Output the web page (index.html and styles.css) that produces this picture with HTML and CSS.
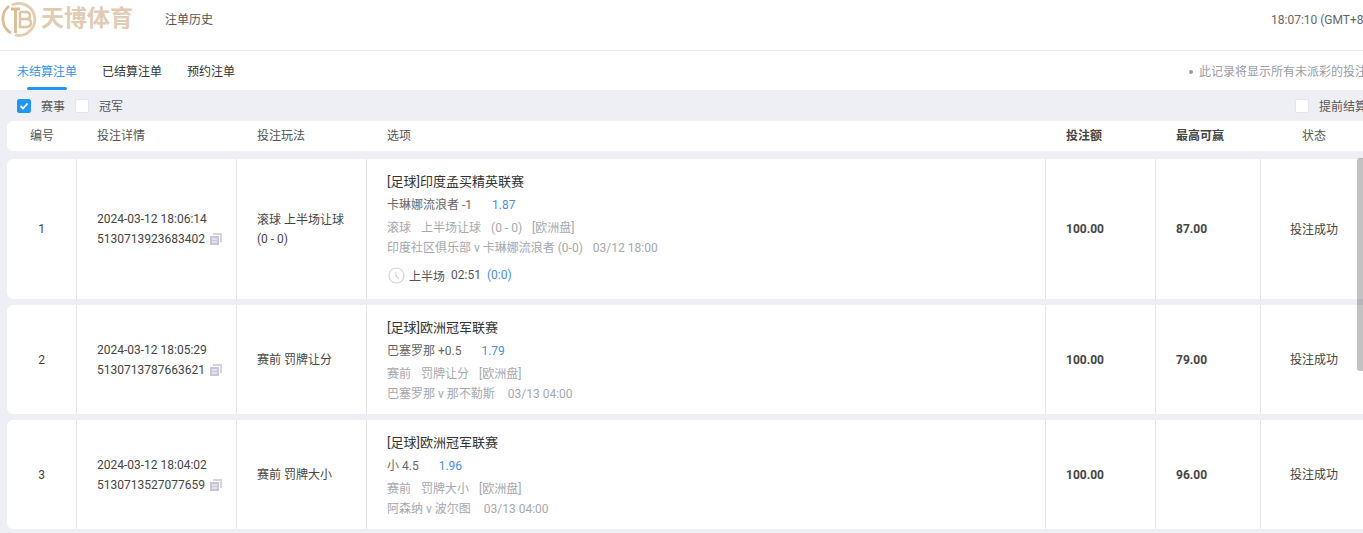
FILE: index.html

```html
<!DOCTYPE html>
<html>
  <head>
    <meta charset="UTF-8" />
    <title>注单历史</title>
    <link rel="stylesheet" href="styles.css">
  </head>
  <body>
    <div class="top-bar">
      <div class="logo">
        <svg class="logo-mark" width="40" height="40" viewBox="0 0 40 40" fill="none">
          <path d="M12 5 A16 16 0 1 1 15 35" stroke="#e6ccae" stroke-width="2.800" />
          <path d="M9 6 A16.500 16.500 0 0 0 11 33" stroke="#dcbb97" stroke-width="2.800" />
          <path d="M11 9 H20 M15.500 9 V33" stroke="#dcbb97" stroke-width="2.800" />
          <path d="M20 12 H26 Q30 12 30 15.500 Q30 19 26 19 H20 M26 19 Q31 19 31 23 Q31 27 26 27 H20 V12" stroke="#e0c3a2" stroke-width="2.400" />
        </svg>
        <span class="logo-text">天博体育</span>
      </div>
      <div class="page-title">注单历史</div>
      <div class="clock">18:07:10 (GMT+8)</div>
    </div>

    <div class="tabs">
      <div class="tab tab--active">未结算注单</div>
      <div class="tab">已结算注单</div>
      <div class="tab">预约注单</div>
      <div class="tabs-note">此记录将显示所有未派彩的投注</div>
    </div>

    <div class="content">
      <div class="filters">
        <span class="check check--on">
          <svg width="10" height="10" viewBox="0 0 10 10" fill="none"><path d="M1.500 5 L4 7.500 L8.500 2.500" stroke="#fff" stroke-width="1.800" /></svg>
        </span>
        <span class="filter-label">赛事</span>
        <span class="check"></span>
        <span class="filter-label">冠军</span>
        <span class="filters-right">
          <span class="check"></span>
          <span class="filter-label">提前结算</span>
        </span>
      </div>

      <div class="table-head grid">
        <div class="center">编号</div>
        <div class="pad">投注详情</div>
        <div class="pad">投注玩法</div>
        <div class="pad">选项</div>
        <div class="pad bold">投注额</div>
        <div class="pad bold">最高可赢</div>
        <div class="center">状态</div>
      </div>

      <div class="row grid">
        <div class="cell center">1</div>
        <div class="cell pad">
          <div class="line">2024-03-12 18:06:14</div>
          <div class="line">5130713923683402 <svg class="copy" width="14" height="14" viewBox="0 0 14 14"><path d="M4 1 H13 V10 H11 V3 H4 Z" fill="#d4d4e2" /><path d="M1 4 H10 V13 H1 Z" fill="#c6c7da" /><path d="M3 7 H8 M3 10 H8" stroke="#fff" /></svg></div>
        </div>
        <div class="cell pad play">滚球 上半场让球<br>(0 - 0)</div>
        <div class="cell pad cell--detail">
          <div class="league">[足球]印度孟买精英联赛</div>
          <div class="pick">卡琳娜流浪者 -1<span class="odds">1.87</span></div>
          <div class="meta meta--first">滚球<span class="sp"></span>上半场让球<span class="sp"></span>(0 - 0)<span class="sp"></span>[欧洲盘]</div>
          <div class="meta">印度社区俱乐部 v 卡琳娜流浪者 (0-0)<span class="sp"></span>03/12 18:00</div>
          <div class="live">
            <svg width="17" height="17" viewBox="0 0 17 17" fill="none"><circle cx="8.500" cy="8.500" r="7.500" stroke="#d5d6dc" stroke-width="1.200" /><path d="M8 4.500 V9 L11 12" stroke="#d5d6dc" stroke-width="1.200" /></svg>
            <span>上半场</span><span>02:51</span><span class="score">(0:0)</span>
          </div>
        </div>
        <div class="cell pad bold">100.00</div>
        <div class="cell pad bold">87.00</div>
        <div class="cell center status">投注成功</div>
      </div>

      <div class="row grid">
        <div class="cell center">2</div>
        <div class="cell pad">
          <div class="line">2024-03-12 18:05:29</div>
          <div class="line">5130713787663621 <svg class="copy" width="14" height="14" viewBox="0 0 14 14"><path d="M4 1 H13 V10 H11 V3 H4 Z" fill="#d4d4e2" /><path d="M1 4 H10 V13 H1 Z" fill="#c6c7da" /><path d="M3 7 H8 M3 10 H8" stroke="#fff" /></svg></div>
        </div>
        <div class="cell pad play">赛前 罚牌让分</div>
        <div class="cell pad cell--detail">
          <div class="league">[足球]欧洲冠军联赛</div>
          <div class="pick">巴塞罗那 +0.5<span class="odds">1.79</span></div>
          <div class="meta meta--first">赛前<span class="sp"></span>罚牌让分<span class="sp"></span>[欧洲盘]</div>
          <div class="meta">巴塞罗那 v 那不勒斯&nbsp;<span class="sp"></span>03/13 04:00</div>
        </div>
        <div class="cell pad bold">100.00</div>
        <div class="cell pad bold">79.00</div>
        <div class="cell center status">投注成功</div>
      </div>

      <div class="row grid">
        <div class="cell center">3</div>
        <div class="cell pad">
          <div class="line">2024-03-12 18:04:02</div>
          <div class="line">5130713527077659 <svg class="copy" width="14" height="14" viewBox="0 0 14 14"><path d="M4 1 H13 V10 H11 V3 H4 Z" fill="#d4d4e2" /><path d="M1 4 H10 V13 H1 Z" fill="#c6c7da" /><path d="M3 7 H8 M3 10 H8" stroke="#fff" /></svg></div>
        </div>
        <div class="cell pad play">赛前 罚牌大小</div>
        <div class="cell pad cell--detail">
          <div class="league">[足球]欧洲冠军联赛</div>
          <div class="pick">小 4.5<span class="odds">1.96</span></div>
          <div class="meta meta--first">赛前<span class="sp"></span>罚牌大小<span class="sp"></span>[欧洲盘]</div>
          <div class="meta">阿森纳 v 波尔图&nbsp;<span class="sp"></span>03/13 04:00</div>
        </div>
        <div class="cell pad bold">100.00</div>
        <div class="cell pad bold">96.00</div>
        <div class="cell center status">投注成功</div>
      </div>

      <div class="scroll-thumb"></div>
    </div>
  </body>
</html>
```

FILE: styles.css

```css
html,
body {
  margin: 0;
  padding: 0;
  height: 100%;
  overflow: hidden;
}
body {
  width: 1363px;
  background: #eeeff5;
  font-family: Roboto, "Noto Sans CJK SC", sans-serif;
  font-size: 12px;
  color: #444;
}
.top-bar {
  height: 50px;
  background: #fff;
  border-bottom: 1px solid #e8e9ef;
  display: flex;
  align-items: flex-start;
  white-space: nowrap;
}
.logo {
  width: 165px;
  height: 40px;
  flex-shrink: 0;
  display: flex;
  align-items: center;
}
.logo-mark {
  flex-shrink: 0;
  margin-right: 1px;
}
.logo-text {
  font-size: 23px;
  font-weight: 700;
  line-height: 38px;
  margin-top: -3px;
  color: #e0ccb3;
}
.page-title {
  line-height: 40px;
  color: #555;
}
.clock {
  margin-left: auto;
  line-height: 40px;
  color: #666;
  width: 92px;
  overflow: hidden;
}
.tabs {
  height: 39px;
  background: #fff;
  display: flex;
  padding-left: 17px;
  white-space: nowrap;
}
.tab {
  position: relative;
  line-height: 43px;
  margin-right: 25px;
  color: #333;
}
.tab--active {
  color: #2f97ea;
}
.tab--active::after {
  content: "";
  position: absolute;
  left: 10px;
  bottom: 0;
  width: 40px;
  height: 3px;
  border-radius: 2px;
  background: #2196f3;
}
.tabs-note {
  margin-left: auto;
  width: 174px;
  overflow: hidden;
  line-height: 43px;
  color: #9a9ca3;
}
.tabs-note::before {
  content: "";
  display: inline-block;
  width: 4px;
  height: 4px;
  border-radius: 50%;
  background: #9a9ca3;
  margin-right: 6px;
  vertical-align: 2px;
}
.content {
  position: relative;
  width: 1363px;
  overflow: hidden;
}
.filters {
  height: 31px;
  display: flex;
  align-items: center;
  padding-left: 17px;
  white-space: nowrap;
}
.check {
  width: 14px;
  height: 14px;
  flex-shrink: 0;
  border-radius: 2px;
  background: #fff;
  border: 1px solid #e4e5ea;
  box-sizing: border-box;
  display: flex;
  align-items: center;
  justify-content: center;
}
.check--on {
  background: #2196f3;
  border-color: #2196f3;
}
.filter-label {
  margin-left: 10px;
  margin-right: 10px;
  color: #555;
}
.filters-right {
  margin-left: auto;
  width: 68px;
  flex-shrink: 0;
  display: flex;
  align-items: center;
  overflow: hidden;
}
.grid {
  display: grid;
  grid-template-columns: 70px 160px 130px 679px 110px 105px 106px;
  width: 1360px;
  margin-left: 7px;
  background: #fff;
  border-radius: 6px 0 0 6px;
}
.table-head {
  height: 30px;
  line-height: 31px;
  margin-bottom: 8px;
  color: #555;
}
.row {
  margin-bottom: 6px;
}
.cell {
  display: flex;
  flex-direction: column;
  justify-content: center;
  border-right: 1px solid #e4e5ea;
  color: #444;
}
.cell:last-child {
  border-right: none;
}
.cell--detail {
  justify-content: flex-start;
  padding-top: 13px;
  padding-bottom: 10px;
}
.pad {
  padding-left: 20px;
}
.center {
  text-align: center;
}
.status {
  padding-bottom: 2px;
}
.bold {
  font-weight: 700;
  color: #444;
}
.line {
  line-height: 20px;
}
.copy {
  vertical-align: -3px;
  margin-left: 1px;
}
.play {
  line-height: 19px;
  padding-top: 2px;
  padding-right: 20px;
}
.league {
  font-size: 13px;
  line-height: 20px;
  color: #333;
}
.pick {
  line-height: 20px;
  margin-top: 3px;
  color: #666;
}
.odds {
  margin-left: 20px;
  color: #4a90d9;
}
.meta {
  line-height: 20px;
  color: #a6a8ae;
}
.meta--first {
  margin-top: 3px;
}
.sp {
  display: inline-block;
  width: 10px;
}
.live {
  display: flex;
  align-items: center;
  gap: 6px;
  height: 20px;
  margin-top: 7px;
  margin-bottom: 4px;
  margin-left: 1px;
  color: #555;
}
.live svg {
  margin-right: -2px;
}
.score {
  color: #4a90d9;
}
.scroll-thumb {
  position: absolute;
  top: 68px;
  right: 0;
  width: 6px;
  height: 213px;
  border-radius: 3px 0 0 3px;
  background: rgba(0, 0, 0, 0.24);
}
```
